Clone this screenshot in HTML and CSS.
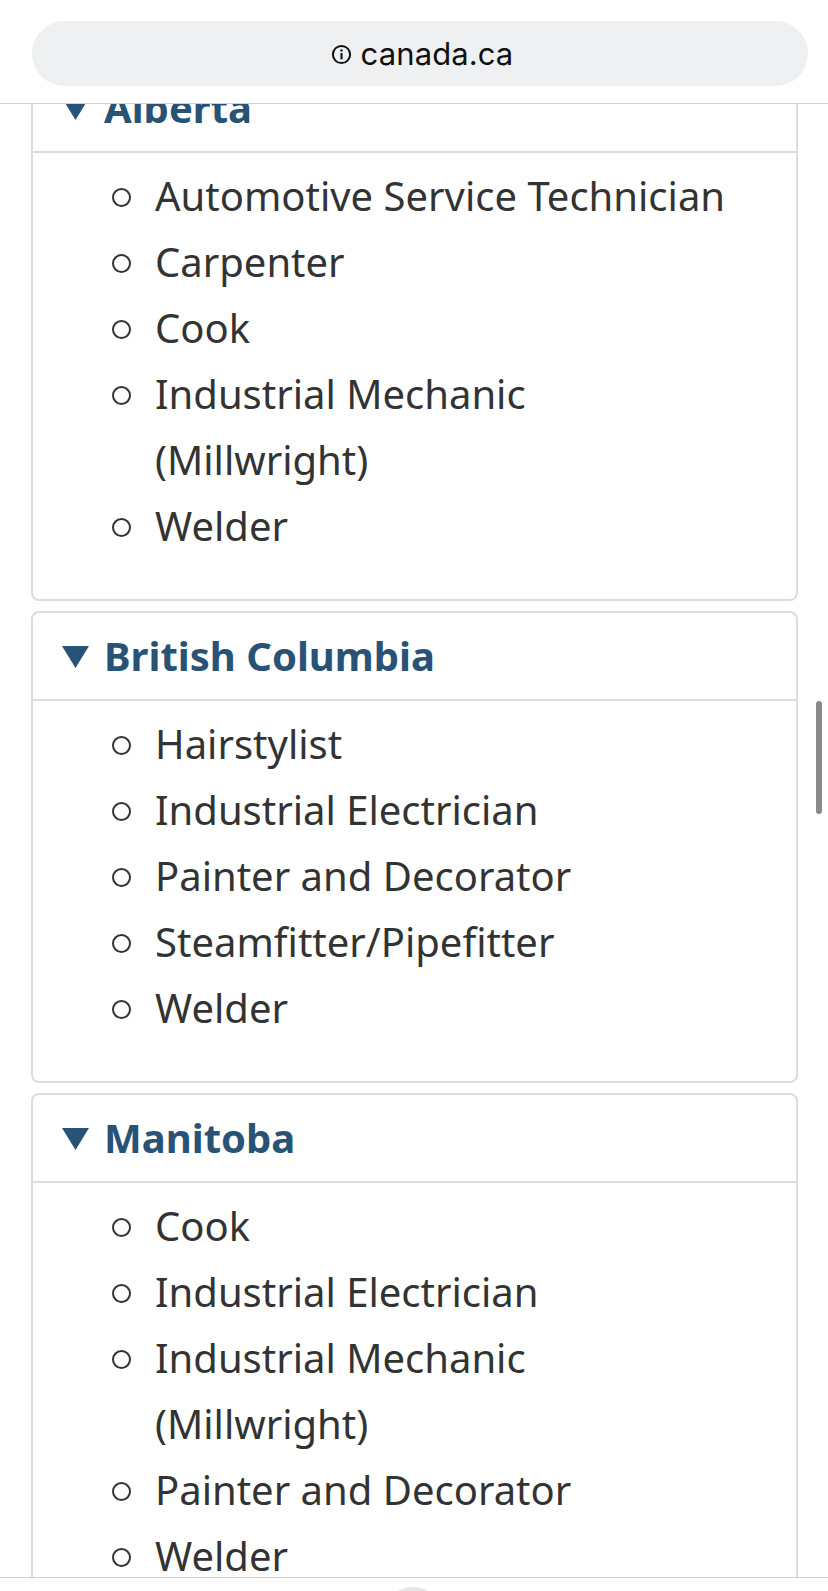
FILE: index.html
```html
<!DOCTYPE html>
<html lang="en">
<head>
<meta charset="utf-8">
<title>canada.ca</title>
<link rel="stylesheet" href="styles.css">
</head>
<body>
<header class="toolbar">
  <div class="address">
    <svg class="info-icon" width="20" height="20" viewBox="0 0 20 20" aria-hidden="true">
      <circle cx="10" cy="10" r="8.2" fill="none" stroke="#111" stroke-width="1.9"/>
      <rect x="9" y="8.6" width="2" height="6" fill="#111"/>
      <circle cx="10" cy="6.2" r="1.2" fill="#111"/>
    </svg>
    <span class="url">canada.ca</span>
  </div>
</header>

<main class="content">
  <details class="panel" open>
    <summary><svg class="caret" width="27" height="22" viewBox="0 0 27 22" aria-hidden="true"><polygon points="0,0 27,0 13.5,22" fill="#295376"/></svg>Alberta</summary>
    <ul class="trades">
      <li>Automotive Service Technician</li>
      <li>Carpenter</li>
      <li>Cook</li>
      <li>Industrial Mechanic (Millwright)</li>
      <li>Welder</li>
    </ul>
  </details>

  <details class="panel" open>
    <summary><svg class="caret" width="27" height="22" viewBox="0 0 27 22" aria-hidden="true"><polygon points="0,0 27,0 13.5,22" fill="#295376"/></svg>British Columbia</summary>
    <ul class="trades">
      <li>Hairstylist</li>
      <li>Industrial Electrician</li>
      <li>Painter and Decorator</li>
      <li>Steamfitter/Pipefitter</li>
      <li>Welder</li>
    </ul>
  </details>

  <details class="panel" open>
    <summary><svg class="caret" width="27" height="22" viewBox="0 0 27 22" aria-hidden="true"><polygon points="0,0 27,0 13.5,22" fill="#295376"/></svg>Manitoba</summary>
    <ul class="trades">
      <li>Cook</li>
      <li>Industrial Electrician</li>
      <li>Industrial Mechanic (Millwright)</li>
      <li>Painter and Decorator</li>
      <li>Welder</li>
    </ul>
  </details>
</main>

<div class="scrollbar"></div>
<footer class="bottombar"><span class="home-dot"></span></footer>
</body>
</html>
```

FILE: styles.css
```css
* { box-sizing: border-box; }

html, body {
  margin: 0;
  padding: 0;
  background: #ffffff;
}

body {
  font-family: "Noto Sans", "Open Sans", sans-serif;
  color: #333333;
  font-size: 40px;
  line-height: 66px;
}

.toolbar {
  position: fixed;
  top: 0;
  left: 0;
  right: 0;
  height: 104px;
  background: #ffffff;
  border-bottom: 1px solid #d2d2d2;
  padding: 21px 20px 0 32px;
  z-index: 10;
}

.address {
  height: 65px;
  border-radius: 33px;
  background: #eff0f2;
  display: flex;
  align-items: center;
  justify-content: center;
  gap: 9px;
  padding-left: 4px;
}

.info-icon {
  flex: none;
  margin-top: 2px;
  width: 21px;
  height: 21px;
}

.url {
  font-family: Inter, "Liberation Sans", sans-serif;
  font-size: 31px;
  line-height: 40px;
  color: #111111;
  letter-spacing: 0.1px;
}

.content {
  padding: 63px 30px 0 31px;
  display: flex;
  flex-direction: column;
  gap: 10px;
}

.panel {
  border: 2px solid #dcdcdc;
  border-radius: 8px;
}

.panel summary {
  list-style: none;
  display: flex;
  align-items: center;
  gap: 15px;
  padding: 10px 30px 10px 29px;
  border-bottom: 2px solid #dcdcdc;
  color: #295376;
  font-weight: 700;
  cursor: pointer;
}

.panel summary::-webkit-details-marker { display: none; }

.caret {
  flex: none;
  margin-top: 2px;
}

.trades {
  list-style: none;
  margin: 10px 56px 40px 0;
  padding: 0 0 0 80px;
}

.trades li {
  display: flex;
}

.trades li::before {
  content: "";
  flex: none;
  width: 15px;
  height: 15px;
  margin: 25px 24px 0 -1px;
  border: 2px solid #333333;
  border-radius: 50%;
}

.scrollbar {
  position: fixed;
  left: 816px;
  top: 701px;
  width: 6px;
  height: 113px;
  border-radius: 3px;
  background: #8a8a8a;
}

.bottombar {
  position: fixed;
  left: 0;
  right: 0;
  bottom: 0;
  height: 14px;
  background: #ffffff;
  border-top: 1px solid #cfcfcf;
  overflow: hidden;
  display: flex;
  justify-content: center;
}

.home-dot {
  width: 60px;
  height: 60px;
  border-radius: 50%;
  background: #e6e6e6;
  margin-top: 9px;
  margin-left: -2px;
}
```
